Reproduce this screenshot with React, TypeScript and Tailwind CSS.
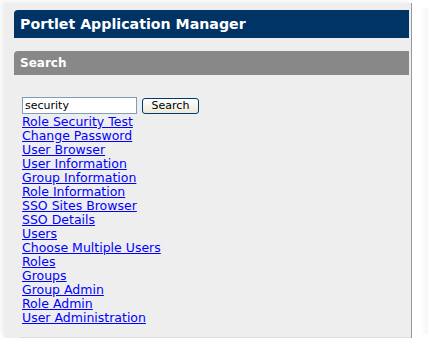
const links = [
  "Role Security Test",
  "Change Password",
  "User Browser",
  "User Information",
  "Group Information",
  "Role Information",
  "SSO Sites Browser",
  "SSO Details",
  "Users",
  "Choose Multiple Users",
  "Roles",
  "Groups",
  "Group Admin",
  "Role Admin",
  "User Administration",
];

export default function App() {
  return (
    <div className="w-[428px] h-[343px] bg-white relative font-['DejaVu_Sans',Verdana,sans-serif]">
      {/* faint shadow strip on the right */}
      <div className="absolute right-0 top-[8px] w-[8px] h-[326px] bg-gradient-to-r from-white to-[#f6f6f6]" />
      <div className="absolute left-[4px] top-[3px] w-[408px] h-[335px] bg-[#eeeeee] border-r border-[#999999] shadow-[-3px_-2px_4px_rgba(0,0,0,0.06)] pl-[10px] pr-[2px] pt-[7px]">
        <div className="h-[28px] bg-[#003366] rounded-tl-[4px] flex items-center pl-[6px]">
          <span className="text-white font-bold text-[14.2px] leading-none">Portlet Application Manager</span>
        </div>
        <div className="mt-[13px] h-[24px] bg-[#888888] rounded-tl-[4px] flex items-center pl-[6px]">
          <span className="text-white font-bold text-[12px] leading-none">Search</span>
        </div>
        <div className="pl-[8px] pt-[22px]">
          <div className="flex items-center gap-[5px]">
            <input
              defaultValue="security"
              className="w-[115px] h-[17px] bg-white border border-[#7f9db9] px-[2px] text-[11px] text-black outline-none"
            />
            <button className="w-[57px] h-[16px] border border-[#003c74] rounded-[3px] bg-gradient-to-b from-white to-[#ece9d8] text-[11px] leading-none text-black">
              Search
            </button>
          </div>
          <div className="flex flex-col items-start mt-[1px]">
            {links.map((l) => (
              <a key={l} href="#" className="text-[12.5px] leading-[14px] text-[#0000ff] underline">
                {l}
              </a>
            ))}
          </div>
        </div>
        <div className="absolute left-[16px] right-0 bottom-0 h-px bg-[#dcdcdc]" />
      </div>
    </div>
  );
}
